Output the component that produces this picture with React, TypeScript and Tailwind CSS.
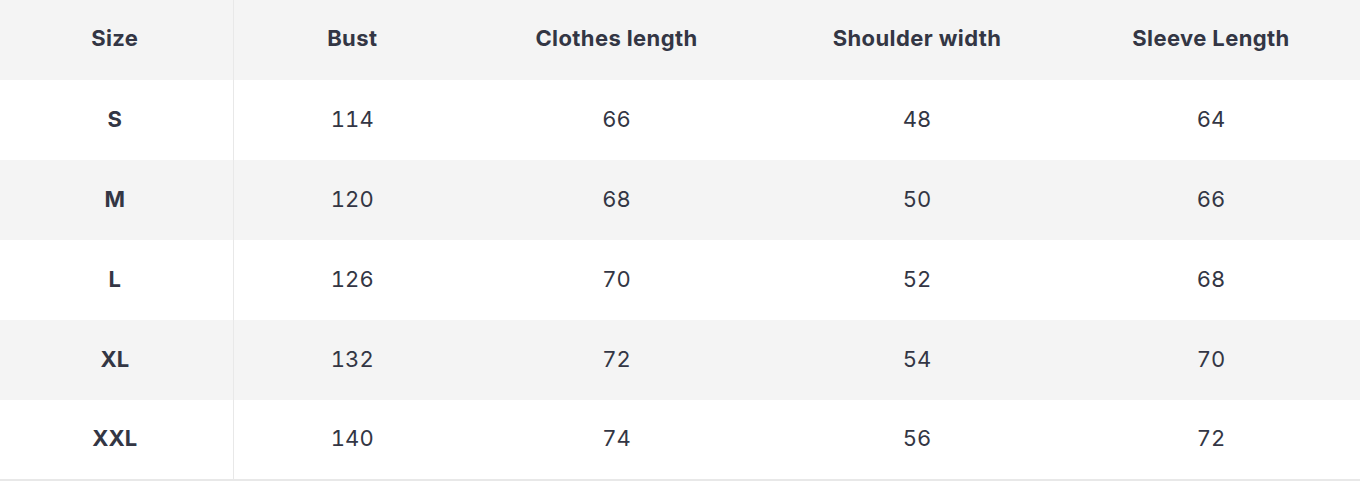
const columns = ['Size', 'Bust', 'Clothes length', 'Shoulder width', 'Sleeve Length']

const rows = [
  ['S', '114', '66', '48', '64'],
  ['M', '120', '68', '50', '66'],
  ['L', '126', '70', '52', '68'],
  ['XL', '132', '72', '54', '70'],
  ['XXL', '140', '74', '56', '72'],
]

const widths = ['w-[233px]', 'w-[238px]', 'w-[291px]', 'w-[310px]', 'w-[288px]']

export default function App() {
  return (
    <div className="w-[1360px] bg-white text-[#333644] font-['Inter','Liberation_Sans',sans-serif]">
      <table className="w-[1360px] table-fixed border-collapse border-b-2 border-[#e8e8e8]">
        <colgroup>
          {widths.map((w, i) => (
            <col key={i} className={w} />
          ))}
        </colgroup>
        <thead>
          <tr className="h-20 bg-[#f4f4f4]">
            {columns.map((c, i) => (
              <th
                key={c}
                className={`text-center text-[22px] font-bold tracking-[0.4px] p-0 pb-[3px] ${
                  i === 0 ? 'border-r border-[#e8e8e8] pr-[3px]' : ''
                } ${i === 4 ? 'pr-[10px]' : ''}`}
              >
                {c}
              </th>
            ))}
          </tr>
        </thead>
        <tbody>
          {rows.map((r, ri) => (
            <tr key={r[0]} className={`h-20 ${ri % 2 === 1 ? 'bg-[#f4f4f4]' : 'bg-white'}`}>
              {r.map((v, i) => (
                <td
                  key={i}
                  className={`text-center text-[22px] p-0 pb-[2px] tabular-nums ${
                    i === 0 ? 'font-bold border-r border-[#e8e8e8] pr-[3px]' : 'font-normal'
                  } ${i === 4 ? 'pr-[10px]' : ''}`}
                >
                  {v}
                </td>
              ))}
            </tr>
          ))}
        </tbody>
      </table>
    </div>
  )
}
